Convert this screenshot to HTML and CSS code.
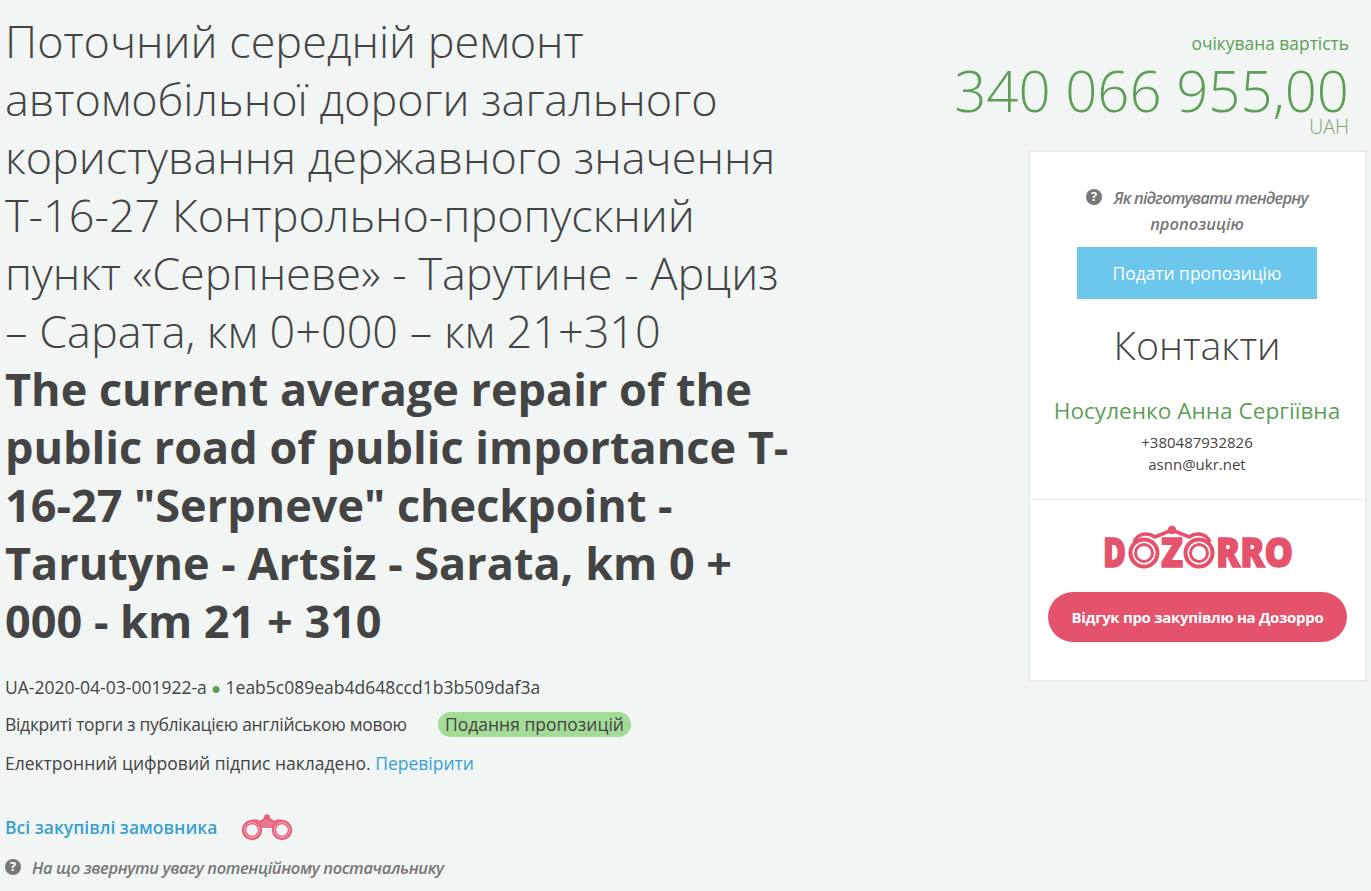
FILE: index.html
```html
<!DOCTYPE html>
<html lang="uk">
<head>
    <meta charset="UTF-8">
    <meta name="viewport" content="width=device-width, initial-scale=1.0">
    <title>Тендер</title>
    <link rel="stylesheet" href="styles.css">
</head>
<body>
    <div class="page">
        <div class="main-col">
            <h1 class="tender-title">Поточний середній ремонт автомобільної дороги загального користування державного значення Т-16-27 Контрольно-пропускний пункт «Серпневе» - Тарутине - Арциз – Сарата, км 0+000 – км 21+310 <b>The current average repair of the public road of public importance T-16-27 "Serpneve" checkpoint - Tarutyne - Artsiz - Sarata, km 0 + 000 - km 21 + 310</b></h1>

            <div class="meta-row">UA-2020-04-03-001922-a <span class="dot">●</span> 1eab5c089eab4d648ccd1b3b509daf3a</div>
            <div class="meta-row meta-tight">Відкриті торги з публікацією англійською мовою <span class="status">Подання пропозицій</span></div>
            <div class="meta-row meta-sign">Електронний цифровий підпис накладено. <a href="#">Перевірити</a></div>

            <div class="buyer-row">
                <a href="#">Всі закупівлі замовника</a>
                <svg class="binoculars" width="52" height="28" viewBox="0 0 52 28">
                    <path d="M3 15 C5 7 14 4 20 8 L26 4 L32 8 C38 4 47 7 49 15 L36 15 L16 15 Z" fill="#e8607a" opacity="0.85"/>
                    <path d="M19 9 L26 4 L33 9" fill="none" stroke="#e8607a" stroke-width="2"/>
                    <circle cx="26" cy="4" r="2.8" fill="#e8607a"/>
                    <g fill="#f1f5f3" stroke="#e8607a">
                        <circle cx="11" cy="17" r="8" stroke-width="4.4"/>
                        <circle cx="41" cy="17" r="8" stroke-width="4.4"/>
                    </g>
                    <g fill="none" stroke="#f4b3bf" stroke-width="1">
                        <circle cx="11" cy="17" r="7.5"/>
                        <circle cx="41" cy="17" r="7.5"/>
                    </g>
                </svg>
            </div>

            <div class="hint hint-bottom">
                <svg class="hint-icon" width="16" height="16" viewBox="0 0 16 16"><circle cx="8" cy="8" r="8" fill="#777"/><text x="8" y="12.4" class="hint-q">?</text></svg>
                <span>На що звернути увагу потенційному постачальнику</span>
            </div>
        </div>

        <div class="side-col">
            <div class="price-label">очікувана вартість</div>
            <div class="price">340 066 955,00</div>
            <div class="currency">UAH</div>

            <div class="card">
                <div class="card-top">
                    <div class="hint hint-card">
                        <svg class="hint-icon" width="16" height="16" viewBox="0 0 16 16"><circle cx="8" cy="8" r="8" fill="#777"/><text x="8" y="12.4" class="hint-q">?</text></svg>
                        <span>Як підготувати тендерну пропозицію</span>
                    </div>
                    <a class="btn-submit" href="#">Подати пропозицію</a>
                    <h2 class="contacts-title">Контакти</h2>
                    <div class="contact-name">Носуленко Анна Сергіївна</div>
                    <div class="contact-line">+380487932826</div>
                    <div class="contact-line">asnn@ukr.net</div>
                </div>
                <div class="card-bottom">
                    <svg class="logo" width="192" height="48" viewBox="0 0 192 48">
                        <g class="logo-text">
                            <text x="1" y="43" textLength="23" lengthAdjust="spacingAndGlyphs">D</text>
                            <text x="59" y="43" textLength="22" lengthAdjust="spacingAndGlyphs">Z</text>
                            <text x="114" y="43" textLength="77" lengthAdjust="spacingAndGlyphs">RRO</text>
                        </g>
                        <path d="M32 18 C36 9 46 8 53 13 L70 6 L87 13 C94 8 104 9 108 18" fill="none" stroke="#e5526c" stroke-width="3.6"/>
                        <circle cx="70" cy="6" r="4.2" fill="#e5526c"/>
                        <g fill="none" stroke="#e5526c">
                            <circle cx="42" cy="29" r="13.5" stroke-width="4"/>
                            <circle cx="42" cy="29" r="8.5" stroke-width="3"/>
                            <circle cx="97" cy="29" r="13.5" stroke-width="4"/>
                            <circle cx="97" cy="29" r="8.5" stroke-width="3"/>
                        </g>
                    </svg>
                    <a class="btn-dozorro" href="#">Відгук про закупівлю на Дозорро</a>
                </div>
            </div>
        </div>
    </div>
</body>
</html>
```

FILE: styles.css
```css
body {
    margin: 0;
    height: 891px;
    overflow: hidden;
    background-color: #f1f5f3;
    font-family: "Open Sans", sans-serif;
    color: #444;
}

a {
    color: #3a9fd1;
    text-decoration: none;
}

.page {
    display: flex;
    justify-content: space-between;
    padding: 12px 6px 0 5px;
}

.main-col {
    width: 795px;
}

.tender-title {
    margin: 0 0 18px;
    font-size: 45px;
    line-height: 58px;
    font-weight: 300;
    color: #444;
}

.tender-title b {
    display: block;
    font-weight: 700;
}

.meta-row {
    font-size: 17.5px;
    line-height: 38px;
}

.meta-tight {
    margin-top: -2px;
    letter-spacing: -0.3px;
}

.meta-sign {
    margin-top: 1px;
}

.dot {
    color: #5a9e5a;
    font-size: 16px;
}

.status {
    display: inline-block;
    margin-left: 27px;
    padding: 0 7px;
    border-radius: 13px;
    background-color: #a3dc97;
    line-height: 25px;
    letter-spacing: 0;
}

.buyer-row {
    display: flex;
    align-items: center;
    gap: 24px;
    margin-top: 31px;
    font-size: 17.5px;
    font-weight: 600;
}

.hint {
    font-weight: 600;
    font-style: italic;
    color: #777;
}

.hint-icon {
    vertical-align: -1px;
}

.hint-q {
    font-size: 13px;
    font-weight: 700;
    font-style: normal;
    fill: #fff;
    text-anchor: middle;
}

.hint-bottom {
    margin-top: 15px;
    font-size: 16.5px;
    line-height: 24px;
    letter-spacing: -0.37px;
}

.hint-bottom span {
    margin-left: 7px;
}

.side-col {
    width: 337px;
    text-align: right;
}

.price-label {
    margin-top: 18px;
    padding-right: 16px;
    font-size: 17.4px;
    line-height: 26px;
    color: #5e9e58;
    white-space: nowrap;
}

.price {
    margin-left: -100px;
    padding-right: 16px;
    font-size: 56.3px;
    line-height: 68px;
    font-weight: 300;
    color: #5e9e58;
    white-space: nowrap;
}

.currency {
    padding-right: 16px;
    margin-top: -7px;
    font-size: 19.5px;
    line-height: 20px;
    font-weight: 300;
    color: #79a276;
}

.card {
    margin: 15px 0 0 2px;
    background-color: #fff;
    box-shadow: 0 0 0 2px #e9eeec;
    text-align: center;
}

.card-top {
    padding: 33px 1px 24px 0;
    border-bottom: 1px solid #eceeee;
}

.hint-card {
    width: 240px;
    margin: 0 auto;
    font-size: 16.5px;
    line-height: 26px;
}

.hint-card::first-line {
    letter-spacing: -0.85px;
}

.hint-card span {
    margin-left: 8px;
}

.btn-submit {
    display: block;
    width: 240px;
    margin: 10px auto 0;
    background-color: #6cc7ec;
    color: #fff;
    font-size: 17.4px;
    line-height: 52px;
}

.contacts-title {
    margin: 17px 0 0;
    font-size: 39.3px;
    line-height: 58px;
    font-weight: 300;
    color: #444;
}

.contact-name {
    margin-top: 22px;
    margin-bottom: 5px;
    font-size: 22.6px;
    line-height: 30px;
    color: #5e9e58;
}

.contact-line {
    font-size: 15px;
    line-height: 22px;
}

.card-bottom {
    padding: 24px 0 38px;
}

.logo {
    display: block;
    margin: 0 auto;
}

.logo-text {
    font-family: "Open Sans", sans-serif;
    font-weight: 800;
    font-size: 40px;
    fill: #e5526c;
    stroke: #e5526c;
    stroke-width: 1.4px;
}

.btn-dozorro {
    display: block;
    margin: 20px 18px 0;
    background-color: #e5526c;
    border-radius: 25px;
    color: #fff;
    font-size: 15px;
    font-weight: 700;
    line-height: 50px;
    letter-spacing: -0.3px;
}
```
